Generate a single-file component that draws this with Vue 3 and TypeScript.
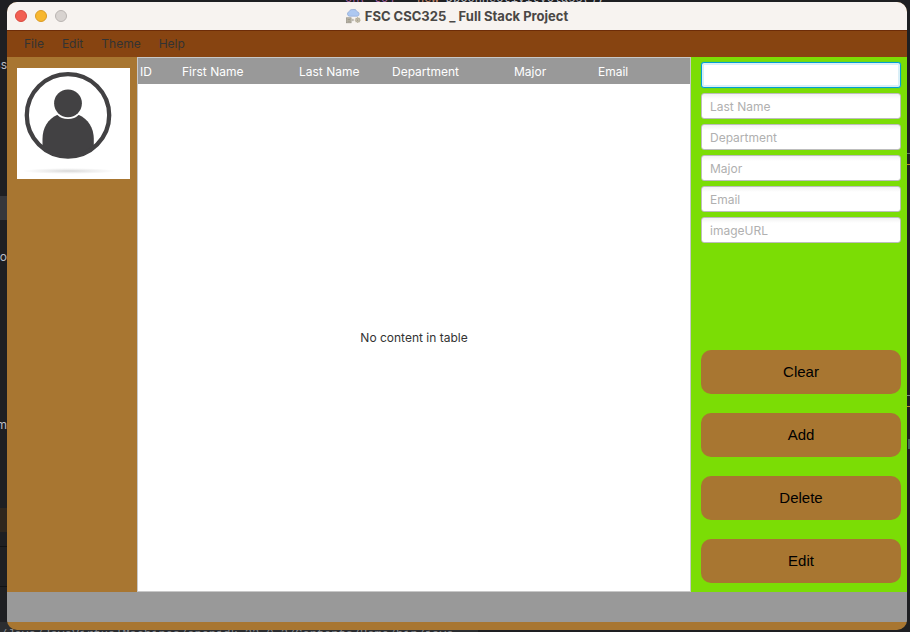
<script setup lang="ts">
import { ref } from 'vue'

interface Field {
  name: string
  focused: boolean
}

const menus: string[] = ['File', 'Edit', 'Theme', 'Help']
const columns: string[] = ['ID', 'First Name', 'Last Name', 'Department', 'Major', 'Email']
const actions: string[] = ['Clear', 'Add', 'Delete', 'Edit']
const fields: Field[] = [
  { name: 'First Name', focused: true },
  { name: 'Last Name', focused: false },
  { name: 'Department', focused: false },
  { name: 'Major', focused: false },
  { name: 'Email', focused: false },
  { name: 'imageURL', focused: false },
]
const values = ref<string[]>(fields.map(() => ''))

function run(action: string): void {
  if (action === 'Clear') values.value = fields.map(() => '')
}
</script>

<template>
  <div class="desktop">
    <div class="editor" aria-hidden="true">
      <span class="code top"><i>on("to]</i> <b>=</b> <em>new</em> DbConnectivityClass();</span>
      <span class="code frag f1">ss</span>
      <span class="code frag f2">o</span>
      <span class="code frag f3">m</span>
      <span class="band b1"></span>
      <span class="band b2"></span>
      <span class="band b3"></span>
      <span class="band b4"></span>
      <span class="mark m1"></span>
      <span class="mark m2"></span>
      <span class="mark m3"></span>
      <span class="mark m4"></span>
      <span class="mark m5"></span>
      <span class="console"><span class="code bottom">/Java/JavaVirtualMachines/openjdk-22.0.2/Contents/Home/bin/java</span></span>
    </div>

    <div class="window">
      <header class="titlebar">
        <div class="lights">
          <button class="light close" type="button" aria-label="Close"></button>
          <button class="light minimize" type="button" aria-label="Minimize"></button>
          <button class="light zoom" type="button" aria-label="Zoom"></button>
        </div>
        <h1 class="title">
          <svg class="app-icon" width="15" height="15" viewBox="0 0 15 15" aria-hidden="true">
            <path d="M3.6 7.2a2.3 2.3 0 0 1-.5-4.500A3.400 3.400 0 0 1 7 .5a3.300 3.300 0 0 1 4 2.200 2.300 2.300 0 0 1 .5 4.500z" fill="#adc8f1" stroke="#8fa9d6" stroke-width=".7" />
            <rect x=".5" y="8.800" width="4.600" height="5" fill="#bbb6a7" stroke="#969287" stroke-width=".7" />
            <path d="M1.600 10.500h2.500M1.600 12.200h2.500" stroke="#8f8b80" stroke-width=".6" />
            <path d="M5.500 11h2.500M6.800 9.800v2.400" stroke="#aaa69c" stroke-width=".8" />
            <path d="M11.700 8.100v6M8.700 11.100h6M9.600 9l4.200 4.200M13.800 9l-4.200 4.200" stroke="#c6bfa9" stroke-width="1.200" />
            <circle cx="11.700" cy="11.100" r="2" fill="#c9c2ae" stroke="#aaa492" stroke-width=".6" />
            <circle cx="11.700" cy="11.100" r=".7" fill="#8f8b80" />
          </svg>
          <span>FSC CSC325 _ Full Stack Project</span>
        </h1>
      </header>

      <nav class="menubar" aria-label="Main menu">
        <button v-for="menu in menus" :key="menu" class="menu" type="button">{{ menu }}</button>
      </nav>

      <div class="body">
        <aside class="profile">
          <svg class="avatar" viewBox="0 0 113 111" role="img" aria-label="Profile picture">
            <defs>
              <radialGradient id="shade">
                <stop offset="0" stop-color="#d8d8d8" />
                <stop offset=".5" stop-color="#eee" />
                <stop offset="1" stop-color="#fff" />
              </radialGradient>
              <clipPath id="disc"><circle cx="51" cy="47.300" r="42" /></clipPath>
            </defs>
            <rect width="113" height="111" fill="#fff" />
            <ellipse cx="52" cy="103" rx="47" ry="3" fill="url(#shade)" />
            <g clip-path="url(#disc)">
              <path d="M25.500 96V71C25.500 60 31 51 40.500 46.800H61.500C71 51 76.800 60 76.800 71V96Z" fill="#424143" />
            </g>
            <circle cx="51" cy="35.300" r="15.800" fill="#fff" />
            <circle cx="51" cy="35.300" r="13.900" fill="#424143" />
            <circle cx="51" cy="47.300" r="41.200" fill="none" stroke="#424143" stroke-width="4.300" />
          </svg>
        </aside>

        <main class="records">
          <table class="table">
            <colgroup>
              <col class="c-id" />
              <col class="c-first" />
              <col class="c-last" />
              <col class="c-dept" />
              <col class="c-major" />
              <col />
            </colgroup>
            <thead>
              <tr>
                <th v-for="column in columns" :key="column" scope="col">{{ column }}</th>
              </tr>
            </thead>
            <tbody>
              <tr>
                <td :colspan="columns.length">No content in table</td>
              </tr>
            </tbody>
          </table>
        </main>

        <form class="form" @submit.prevent>
          <div class="fields">
            <input
              v-for="(field, i) in fields"
              :key="field.name"
              v-model="values[i]"
              class="field"
              :class="{ focused: field.focused }"
              type="text"
              :aria-label="field.name"
              :placeholder="field.focused ? '' : field.name"
            />
          </div>
          <div class="actions">
            <button v-for="action in actions" :key="action" class="action" type="button" @click="run(action)">
              {{ action }}
            </button>
          </div>
        </form>
      </div>

      <footer class="status"></footer>
    </div>
  </div>
</template>

<style>
body {
  background: #1e1f22;
}
</style>

<style scoped>
.desktop {
  position: relative;
  box-sizing: border-box;
  min-height: 100vh;
  padding: 2px 3px 2px 7px;
  display: flex;
  overflow: hidden;
  background: #1e1f22;
  font-family: Inter, "Liberation Sans", sans-serif;
  font-size: 12px;
}

.editor {
  position: absolute;
  inset: 0;
  overflow: hidden;
}

.code {
  position: absolute;
  font: 12px/16px "Liberation Mono", monospace;
  color: #bcbec4;
  white-space: pre;
}

.code i {
  color: #a55fa0;
  font-style: normal;
}

.code b {
  font-weight: 400;
}

.code em {
  color: #cf8e6d;
  font-style: normal;
}

.top { top: -9px; left: 345px; }
.frag {
  right: calc(100% - 7px);
  font-family: Inter, sans-serif;
}
.f1 { top: 57px; }
.f2 { top: 249px; }
.f3 { top: 417px; }

.band {
  position: absolute;
  left: 0;
  width: 7px;
  height: 24px;
}

.b1 { top: 196px; background: #36373b; }
.b2 { top: 508px; background: #30271d; }
.b3 { top: 546px; height: 1px; background: #111214; }
.b4 { top: 586px; height: 1px; background: #111214; }

.mark {
  position: absolute;
  right: 0;
  width: 3px;
  height: 1px;
}

.m1 { top: 153px; background: #5f7a65; }
.m2 { top: 164px; background: #b58b31; }
.m3 { top: 395px; background: #7d8784; }
.m4 { top: 406px; background: #b58b31; }
.m5 { top: 439px; width: 2px; height: 10px; background: #43695a; }

.console {
  position: absolute;
  left: 0;
  bottom: 0;
  width: 478px;
  height: 10px;
  overflow: hidden;
  background: #2b2d30;
}

.bottom {
  top: 5px;
  left: 0;
  color: #85878c;
}

.window {
  position: relative;
  flex: 1;
  display: flex;
  flex-direction: column;
  overflow: hidden;
  border-radius: 10px;
  background: #a87631;
}

.titlebar {
  display: grid;
  grid-template-columns: 1fr auto 1fr;
  align-items: center;
  height: 28px;
  padding: 0 8px;
  background: #f7f3f0;
}

.lights {
  display: flex;
  gap: 8px;
}

.light {
  width: 12px;
  height: 12px;
  padding: 0;
  border: 1px solid;
  border-radius: 50%;
}

.close { background: #f25f52; border-color: #d84b40; }
.minimize { background: #f7b72f; border-color: #d99b25; }
.zoom { background: #d8d3d0; border-color: #b9b4b1; }

.title {
  display: flex;
  align-items: center;
  gap: 4px;
  margin: 0;
  font: 700 13px/16px Inter, sans-serif;
  color: #4a4745;
}

.menubar {
  display: flex;
  gap: 18px;
  box-sizing: border-box;
  height: 27px;
  padding: 0 17px 2px;
  border-top: 1px solid #6d2c08;
  background: #874411;
}

.menu {
  padding: 0;
  border: 0;
  background: none;
  font: inherit;
  color: #333;
}

.body {
  flex: 1;
  display: grid;
  grid-template-columns: 130px 1fr 216px;
}

.profile {
  padding: 11px 7px 0 10px;
}

.avatar {
  display: block;
  width: 100%;
}

.records {
  display: grid;
  border: 1px solid #c8c8c8;
  background: #fff;
}

.table {
  width: 100%;
  height: 100%;
  table-layout: fixed;
  border-collapse: collapse;
  color: #333;
}

.c-id { width: 42px; }
.c-first { width: 117px; }
.c-last { width: 93px; }
.c-dept { width: 122px; }
.c-major { width: 84px; }

.table th {
  height: 26px;
  padding: 0 2px;
  background: #999;
  color: #fff;
  font-weight: 400;
  text-align: left;
}

.table td {
  padding: 0;
  text-align: center;
  vertical-align: middle;
}

.form {
  display: flex;
  flex-direction: column;
  justify-content: space-between;
  padding: 5px 6px 9px 10px;
  background: #7bdd05;
}

.fields {
  display: flex;
  flex-direction: column;
  gap: 5px;
}

.field {
  box-sizing: border-box;
  width: 100%;
  height: 26px;
  padding: 0 8px;
  border: 1px solid #bdbdbd;
  border-radius: 3px;
  outline: none;
  background: linear-gradient(#f1f1f1, #fff 5px);
  font: inherit;
  color: #333;
}

.field::placeholder {
  color: #b0b0b0;
  opacity: 1;
}

.focused,
.field:focus {
  border-color: #039ed3;
  background: #fff;
  box-shadow: 0 0 1px #039ed3, inset 0 0 0 2px #daeff7;
}

.actions {
  display: flex;
  flex-direction: column;
  gap: 19px;
}

.action {
  height: 44px;
  padding: 0;
  border: 0;
  border-radius: 10px;
  background: #a87631;
  font: 15px/20px "Liberation Sans", Arial, sans-serif;
  color: #000;
}

.status {
  height: 30px;
  margin-bottom: 8px;
  background: #999;
}
</style>
